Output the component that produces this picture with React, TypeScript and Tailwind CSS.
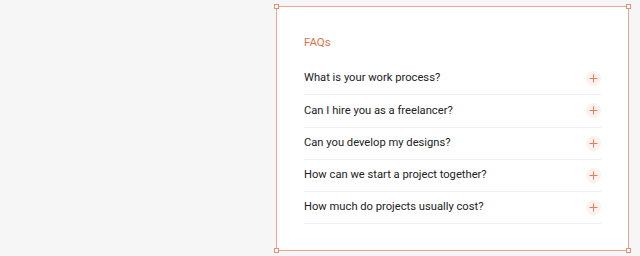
import React from 'react';

const questions = [
  'What is your work process?',
  'Can I hire you as a freelancer?',
  'Can you develop my designs?',
  'How can we start a project together?',
  'How much do projects usually cost?',
];

function Handle({ className }: { className: string }) {
  return <span className={`absolute w-[5px] h-[5px] bg-white border border-[#e48f78] ${className}`} />;
}

export default function App() {
  return (
    <div className="h-[256px] w-[640px] bg-[#f6f6f6] pl-[276px] pt-[6px]" style={{ fontFamily: 'Roboto, "Noto Sans", sans-serif' }}>
      <div className="relative w-[353px] h-[245px] bg-white border border-[#eda592]">
        <Handle className="-left-[3px] -top-[3px]" />
        <Handle className="-right-[3px] -top-[3px]" />
        <Handle className="-left-[3px] -bottom-[3px]" />
        <Handle className="-right-[3px] -bottom-[3px]" />
        <div className="px-[27px] pt-[27px]">
          <h2 className="text-[11.5px] leading-4 text-[#d8744a]">FAQs</h2>
          <div className="mt-[13px] flex flex-col">
            {questions.map((q) => (
              <div key={q} className="h-[32.3px] flex items-center justify-between border-b border-[#f0f0f0] text-[11.2px] text-[#222222]">
                <span>{q}</span>
                <span className="w-[15px] h-[15px] rounded-full bg-[#fdf1ee] flex items-center justify-center">
                  <svg width="9" height="9" viewBox="0 0 9 9" fill="none" stroke="#df7f62" strokeWidth="1">
                    <path d="M4.5 0.5v8M0.5 4.5h8" />
                  </svg>
                </span>
              </div>
            ))}
          </div>
        </div>
      </div>
    </div>
  );
}
